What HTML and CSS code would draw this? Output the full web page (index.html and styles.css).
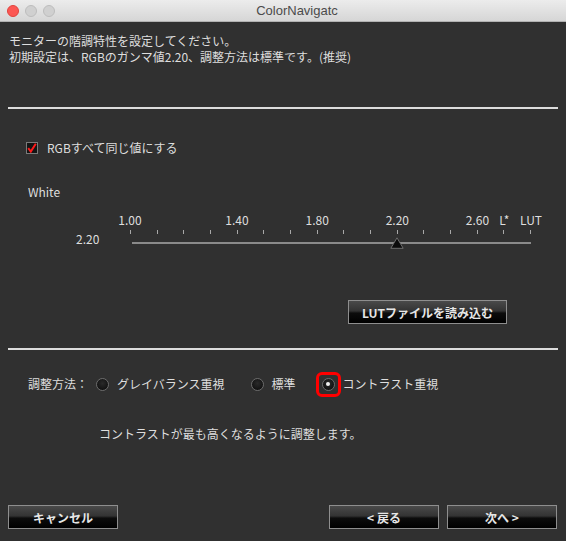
FILE: index.html
```html
<!DOCTYPE html>
<html lang="ja">
<head>
<meta charset="utf-8">
<title>ColorNavigatc</title>
<link rel="stylesheet" href="styles.css">
</head>
<body>
<div class="window">
  <header class="titlebar">
    <div class="lights">
      <span class="light red"></span>
      <span class="light"></span>
      <span class="light"></span>
    </div>
    <div class="title">ColorNavigatc</div>
  </header>
  <main class="content">
    <section class="intro">
      <p>モニターの階調特性を設定してください。</p>
      <p>初期設定は、RGBのガンマ値2.20、調整方法は標準です。(推奨)</p>
    </section>
    <div class="sep sep-top"></div>

    <label class="check-row">
      <span class="checkbox">
        <svg width="10" height="10" viewBox="0 0 10 10"><path d="M1.2 5.2 L3.8 8.6 L8.8 0.8" fill="none" stroke="#ff1a1a" stroke-width="2"/></svg>
      </span>
      <span>RGBすべて同じ値にする</span>
    </label>

    <div class="channel">White</div>

    <div class="slider-row">
      <div class="current">2.20</div>
      <div class="slider">
        <div class="labels">
          <span class="lbl" style="left:0%">1.00</span>
          <span class="lbl" style="left:26.67%">1.40</span>
          <span class="lbl" style="left:46.67%">1.80</span>
          <span class="lbl" style="left:66.67%">2.20</span>
          <span class="lbl" style="left:86.67%">2.60</span>
          <span class="lbl" style="left:93.33%">L*</span>
          <span class="lbl" style="left:100%">LUT</span>
        </div>
        <div class="ticks">
          <i></i><i></i><i></i><i></i><i></i><i></i><i></i><i></i>
          <i></i><i></i><i></i><i></i><i></i><i></i><i></i><i></i>
        </div>
        <div class="track-wrap">
          <div class="track"></div>
          <svg class="thumb" style="left:66.67%" width="14" height="12" viewBox="0 0 14 12"><path d="M7 0.8 L13.2 11.3 L0.8 11.3 Z" fill="#0c0c0c" stroke="#6e6e6e" stroke-width="1"/></svg>
        </div>
      </div>
    </div>

    <div class="lut-row">
      <button class="btn btn-lut">LUTファイルを読み込む</button>
    </div>

    <div class="sep sep-mid"></div>

    <div class="method-row">
      <span class="method-label">調整方法：</span>
      <span class="radio"></span>
      <span class="opt">グレイバランス重視</span>
      <span class="radio"></span>
      <span class="opt">標準</span>
      <span class="radio checked highlight"></span>
      <span class="opt opt-last">コントラスト重視</span>
    </div>

    <p class="desc">コントラストが最も高くなるように調整します。</p>

    <footer class="footer">
      <button class="btn btn-foot">キャンセル</button>
      <button class="btn btn-foot btn-back">&lt; 戻る</button>
      <button class="btn btn-foot">次へ &gt;</button>
    </footer>
  </main>
</div>
</body>
</html>
```

FILE: styles.css
```css
* { box-sizing: border-box; }
html, body { margin: 0; padding: 0; }
body {
  width: 566px;
  height: 541px;
  background: #303030;
  font-family: "Noto Sans CJK JP", "Noto Sans", sans-serif;
  font-size: 12px;
  color: #dedede;
  overflow: hidden;
}
p { margin: 0; }

.window { height: 541px; display: flex; flex-direction: column; }

.titlebar {
  height: 22px;
  flex: none;
  display: flex;
  align-items: center;
  position: relative;
  background: linear-gradient(#ececec, #d6d6d6);
  border-bottom: 1px solid #b1b1b1;
}
.lights { display: flex; gap: 6px; padding-left: 7px; }
.light {
  width: 12px; height: 12px; border-radius: 50%;
  background: #d0d0d0;
  border: 1px solid #bdbdbd;
}
.light.red { background: #fc5753; border-color: #e0443e; }
.title {
  position: absolute; left: 0; right: 0; top: 0; bottom: 0;
  display: flex; align-items: center; justify-content: center;
  font-family: "Liberation Sans", "Noto Sans", sans-serif;
  font-size: 13px;
  color: #4b4b4b;
  padding-left: 28px;
}

.content { flex: 1; display: flex; flex-direction: column; }

.intro { padding: 11px 9px 0; line-height: 16px; }

.sep { height: 2px; background: #dcdcdc; margin: 0 8px; }
.sep-top { margin-top: 42px; }

.check-row {
  display: flex; align-items: center; gap: 9px;
  margin: 32px 0 0 26px;
  line-height: 14px;
}
.checkbox {
  width: 12px; height: 12px;
  background: #141414;
  border: 1px solid #7a7a7a;
  display: flex; align-items: center; justify-content: center;
}

.channel { margin: 29px 0 0 28px; line-height: 16px; }

.slider-row { display: flex; margin-top: 12px; }
.current { margin: 19px 0 0 76px; width: 54px; line-height: 16px; }
.slider { width: 401px; }
.labels { position: relative; height: 16px; line-height: 16px; }
.lbl { position: absolute; top: 0; transform: translateX(-50%); white-space: nowrap; }
.ticks { display: flex; justify-content: space-between; height: 4px; margin-top: 2px; }
.ticks i { width: 1px; height: 4px; background: #a8a8a8; }
.track-wrap { position: relative; height: 16px; padding-top: 8px; }
.track { margin-left: 2px; height: 2px; background: #8a8a8a; }
.thumb { position: absolute; top: 3px; transform: translateX(-50%); }

.lut-row { display: flex; justify-content: flex-end; padding-right: 59px; margin-top: 50px; }

.btn {
  font-family: "Noto Sans CJK JP", "Noto Sans", sans-serif;
  font-weight: bold;
  font-size: 12px;
  color: #e6e6e6;
  height: 24px;
  border: 1px solid #8e8e8e;
  background: linear-gradient(#4a4a4a 0%, #333 45%, #0c0c0c 55%, #000 100%);
  padding: 0;
  cursor: pointer;
}
.btn-lut { width: 159px; }

.sep-mid { margin-top: 24px; }

.method-row {
  display: flex; align-items: center;
  margin: 27px 0 0 28px;
  line-height: 14px;
}
.method-label { width: 68px; }
.radio {
  width: 13px; height: 13px; border-radius: 50%;
  background: radial-gradient(circle at 50% 40%, #2a2a2a, #0a0a0a);
  border: 1px solid #6c6c6c;
  position: relative;
  flex: none;
}
.radio.checked::before {
  content: ""; position: absolute; left: 3.5px; top: 3.5px;
  width: 4px; height: 4px; border-radius: 50%; background: #f0f0f0;
}
.radio.highlight::after {
  content: ""; position: absolute; left: -7px; top: -7px; right: -7px; bottom: -7px;
  border: 3px solid #ff0000; border-radius: 6px;
}
.opt { margin: 0 26px 0 8px; }
.opt-last { margin-right: 0; margin-left: 8px; }

.desc { margin: 35px 0 0 99px; line-height: 16px; }

.footer {
  margin-top: auto;
  display: flex;
  padding: 0 9px 12px 8px;
  gap: 8px;
}
.btn-foot { width: 110px; }
.btn-back { margin-left: auto; }
```
